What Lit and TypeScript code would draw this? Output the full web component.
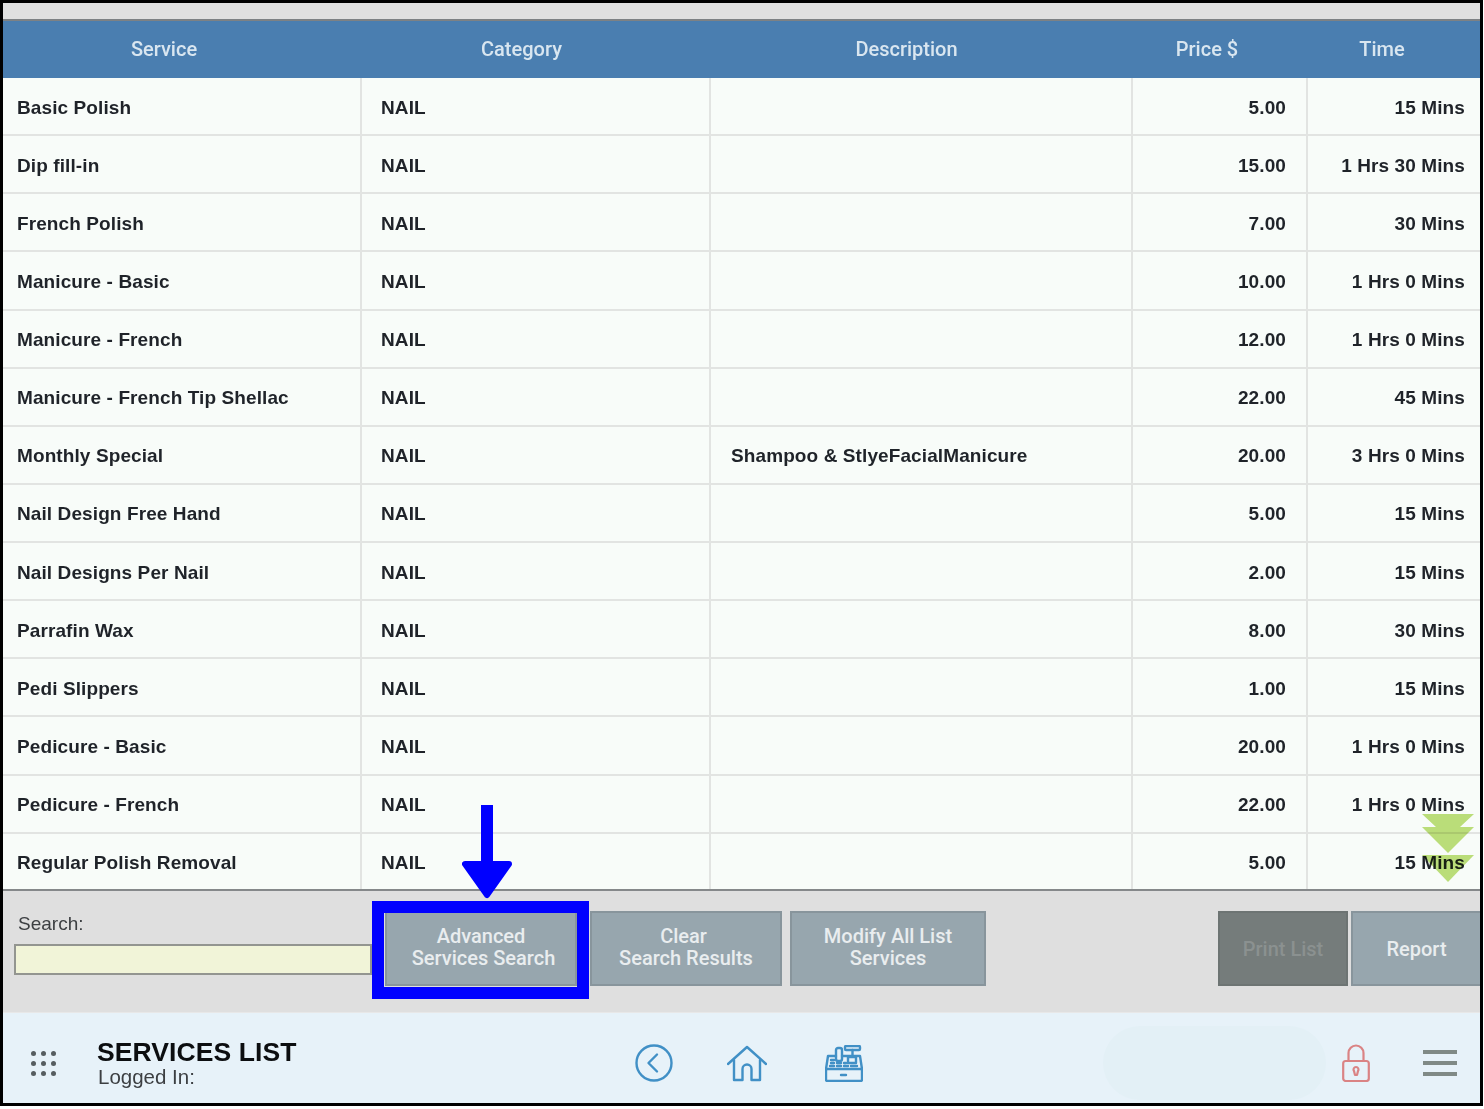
import { LitElement, html, css, svg } from 'lit';
import { customElement } from 'lit/decorators.js';

const SERVICES = [
  ['Basic Polish', '', '5.00', '15 Mins'],
  ['Dip fill-in', '', '15.00', '1 Hrs 30 Mins'],
  ['French Polish', '', '7.00', '30 Mins'],
  ['Manicure - Basic', '', '10.00', '1 Hrs 0 Mins'],
  ['Manicure - French', '', '12.00', '1 Hrs 0 Mins'],
  ['Manicure - French Tip Shellac', '', '22.00', '45 Mins'],
  ['Monthly Special', 'Shampoo & StlyeFacialManicure', '20.00', '3 Hrs 0 Mins'],
  ['Nail Design Free Hand', '', '5.00', '15 Mins'],
  ['Nail Designs Per Nail', '', '2.00', '15 Mins'],
  ['Parrafin Wax', '', '8.00', '30 Mins'],
  ['Pedi Slippers', '', '1.00', '15 Mins'],
  ['Pedicure - Basic', '', '20.00', '1 Hrs 0 Mins'],
  ['Pedicure - French', '', '22.00', '1 Hrs 0 Mins'],
  ['Regular Polish Removal', '', '5.00', '15 Mins'],
];

const HEADERS = ['Service', 'Category', 'Description', 'Price $', 'Time'];

const backIcon = svg`<circle cx="19" cy="19" r="17.5" /><path d="M22 10.5 L13.5 19 L22 27.5" />`;
const homeIcon = svg`<path d="M1 19 L20 2 L39 19" /><path d="M7 15 V35 H15.5 V24 a4.5 4.5 0 0 1 9 0 V35 H33 V15" />`;
const registerIcon = svg`
  <rect x="1" y="24" width="36" height="12" rx="1.5" />
  <path d="M1 24 L3 11 H11 M17 11 H35 L37 24" />
  <rect x="11" y="3" width="6" height="13" rx="2" />
  <rect x="20" y="1" width="15" height="4" rx="1" />
  <path d="M27.5 5 V11" />
  <rect x="23" y="12" width="8" height="6" />
  <path d="M6 15 H9 M6 18 H9 M5 21 H9 M12 21 H16 M12 18 H16 M19 21 H23 M19 18 H21 M26 21 H32 M16 30 H21" />`;
const lockIcon = svg`
  <rect x="1.2" y="17" width="25.6" height="20" rx="2.5" />
  <path d="M6.5 17 V9 a7.5 7.5 0 0 1 15 0 V17" />
  <path d="M14 23 a2.5 2.5 0 0 1 2 4 L15 31 H13 L12 27 a2.5 2.5 0 0 1 2 -4 Z" />`;

@customElement('app-root')
export class AppRoot extends LitElement {
  static styles = css`
    :host {
      display: block;
      width: 1484px;
      height: 1109px;
      background: #fff;
      font-family: Roboto, 'Liberation Sans', sans-serif;
    }

    .frame {
      box-sizing: border-box;
      width: 1483px;
      height: 1106px;
      border: 3px solid #000;
      display: flex;
      flex-direction: column;
      filter: blur(0.45px);
    }

    .topbar {
      height: 16px;
      background: #e0e0e0;
      border-bottom: 2px solid #7d8184;
      flex: none;
    }

    .list {
      position: relative;
      flex: 1;
      min-height: 0;
      overflow: hidden;
      background: #f8fcf9;
    }

    .grid {
      display: grid;
      grid-template-columns: 359px 349px 422px 175px 1fr;
      grid-template-rows: 57px repeat(14, 58.14px);
      font: bold 19px 'Liberation Sans', sans-serif;
      letter-spacing: 0.1px;
      color: #1f2329;
    }

    .head {
      background: #4a7eb0;
      color: #d9e6f0;
      display: flex;
      align-items: center;
      justify-content: center;
      font: 500 20px Roboto, sans-serif;
      letter-spacing: 0;
      padding-bottom: 2px;
      box-sizing: border-box;
    }

    .head.c0 { padding-right: 37px; }
    .head.c1 { padding-right: 30px; }
    .head.c2 { padding-right: 31px; }
    .head.c3 { padding-right: 27px; }
    .head.c4 { padding-right: 24px; }

    .cell {
      box-sizing: border-box;
      display: flex;
      align-items: center;
      border-bottom: 2px solid #e2e4e2;
      border-right: 2px solid #e2e4e2;
      white-space: nowrap;
      padding-top: 3px;
    }

    .cell.c0 { padding-left: 14px; }
    .cell.c1 { padding-left: 19px; }
    .cell.c2 { padding-left: 20px; }
    .cell.c3 { justify-content: flex-end; padding-right: 20px; }
    .cell.c4 { justify-content: flex-end; padding-right: 15px; border-right: none; }

    .scroll-hint {
      position: absolute;
      right: 6px;
      top: 793px;
      width: 52px;
      height: 68px;
      mix-blend-mode: multiply;
    }

    .toolbar {
      flex: none;
      height: 124px;
      box-sizing: border-box;
      background: #dfdfdf;
      border-top: 2px solid #85888a;
      border-bottom: 1px solid #e8e8e8;
      padding: 20px 0 0 11px;
      display: flex;
      align-items: flex-start;
    }

    .search {
      width: 358px;
      margin-right: 13px;
      color: #3c3f42;
      font: 19px 'Liberation Sans', sans-serif;
    }

    .search label {
      display: block;
      margin: 2px 0 9px 4px;
      line-height: 22px;
    }

    .search input {
      display: block;
      box-sizing: border-box;
      width: 100%;
      height: 31px;
      margin: 0;
      background: #f1f4d8;
      border: 2px solid #939590;
    }

    .btn {
      box-sizing: border-box;
      height: 75px;
      border: 2px solid #88959c;
      background: #97a6ae;
      color: #e9edef;
      font: 500 20px/22px Roboto, sans-serif;
      padding: 0;
      text-align: center;
      position: relative;
    }

    .btn.two { padding-bottom: 3px; }
    .btn.advanced { width: 192px; margin-right: 13px; }
    .btn.clear { width: 192px; margin-right: 8px; }
    .btn.modify { width: 196px; margin-right: auto; }
    .btn.print { width: 130px; margin-right: 3px; background: #757c7b; color: #8b9190; border-color: #6d7473; }
    .btn.report { width: 129px; border-right: none; }

    .callout {
      position: absolute;
      left: -15px;
      top: -12px;
      width: 217px;
      height: 98px;
      box-sizing: border-box;
      border: 12.5px solid #0000ff;
    }

    .pointer {
      position: absolute;
      left: 75px;
      top: -108px;
      width: 50px;
      height: 95px;
    }

    .bottombar {
      flex: none;
      height: 90px;
      box-sizing: border-box;
      padding-top: 10px;
      background: #e7f2f9;
      display: flex;
      align-items: center;
    }

    .dots {
      display: grid;
      grid-template-columns: repeat(3, 5px);
      grid-auto-rows: 5px;
      gap: 5px;
      margin: 0 41px 0 28px;
    }

    .dots i { background: #565d60; border-radius: 50%; }

    .title { width: 301px; color: #3c3f42; }

    .title b {
      display: block;
      color: #0c0e10;
      font: bold 26.5px/26px 'Liberation Sans', sans-serif;
      letter-spacing: 0.1px;
    }

    .title span {
      display: block;
      font: 20.5px/22px 'Liberation Sans', sans-serif;
      margin: 1px 0 0 1px;
    }

    .nav {
      display: flex;
      align-items: center;
      margin-left: 237px;
    }

    .nav svg, .lock {
      fill: none;
      stroke: #4190c6;
      stroke-width: 2.4;
      stroke-linecap: round;
      stroke-linejoin: round;
      display: block;
    }

    .back { width: 38px; height: 38px; margin-right: 54px; }
    .home { width: 40px; height: 37px; margin-right: 58px; }
    .register { width: 38px; height: 37px; stroke-width: 2.2; }

    .user-pill {
      width: 223px;
      height: 74px;
      margin-left: 240px;
      border-radius: 37px;
      background: #e3f0f6;
    }

    .lock {
      width: 28px;
      height: 38px;
      margin-left: 16px;
      stroke: #da8384;
      stroke-width: 2.2;
    }

    .burger {
      width: 34px;
      margin-left: 53px;
      display: flex;
      flex-direction: column;
      gap: 7px;
    }

    .burger i { display: block; height: 4px; background: #808a86; }
  `;

  renderRow(row: string[]) {
    const [name, desc, price, time] = row;
    return html`
      <div class="cell c0">${name}</div>
      <div class="cell c1">NAIL</div>
      <div class="cell c2">${desc}</div>
      <div class="cell c3">${price}</div>
      <div class="cell c4">${time}</div>
    `;
  }

  render() {
    return html`
      <div class="frame">
        <div class="topbar"></div>
        <div class="list">
          <div class="grid">
            ${HEADERS.map((h, i) => html`<div class="head c${i}">${h}</div>`)}
            ${SERVICES.map((r) => this.renderRow(r))}
          </div>
          <svg class="scroll-hint" viewBox="0 0 52 68">
            <path fill="#c0e07c" d="M0 0 H52 L38 13 H52 L26 39 L0 13 H14 Z" />
            <path fill="#c0e07c" d="M0 41 H52 L26 68 Z" />
          </svg>
        </div>
        <div class="toolbar">
          <div class="search">
            <label>Search:</label>
            <input type="text" />
          </div>
          <button class="btn two advanced">
            Advanced<br />&nbsp;Services Search
            <span class="callout"></span>
            <svg class="pointer" viewBox="0 0 50 95">
              <rect x="19" y="0" width="12" height="60" fill="#0000ff" />
              <path fill="#0000ff" stroke="#0000ff" stroke-width="6" stroke-linejoin="round" d="M3 59 H47 L25 90 Z" />
            </svg>
          </button>
          <button class="btn two clear">Clear&nbsp;<br />Search Results</button>
          <button class="btn two modify">Modify All List<br />Services</button>
          <button class="btn print">Print List</button>
          <button class="btn report">Report</button>
        </div>
        <div class="bottombar">
          <div class="dots">${Array.from({ length: 9 }, () => html`<i></i>`)}</div>
          <div class="title">
            <b>SERVICES LIST</b>
            <span>Logged In:</span>
          </div>
          <div class="nav">
            <svg class="back" viewBox="0 0 38 38">${backIcon}</svg>
            <svg class="home" viewBox="0 0 40 37">${homeIcon}</svg>
            <svg class="register" viewBox="0 0 38 37">${registerIcon}</svg>
          </div>
          <div class="user-pill"></div>
          <svg class="lock" viewBox="0 0 28 38">${lockIcon}</svg>
          <div class="burger"><i></i><i></i><i></i></div>
        </div>
      </div>
    `;
  }
}
